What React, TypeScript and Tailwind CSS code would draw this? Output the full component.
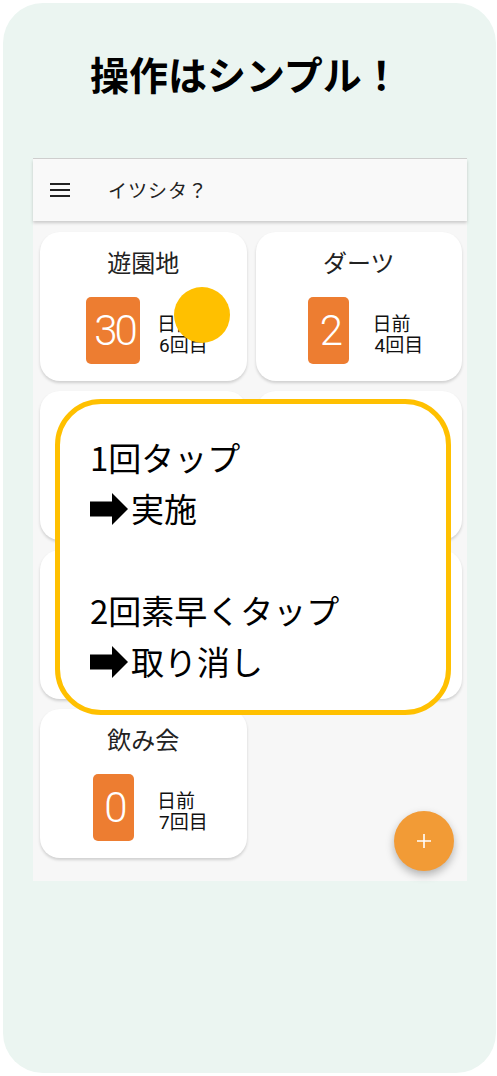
import React from 'react'

type Item = {
  title: string
  days: number
  count: number
}

// the middle four cards sit under the hint panel, only their edges show
const items: (Item | null)[] = [
  { title: '遊園地', days: 30, count: 6 },
  { title: 'ダーツ', days: 2, count: 4 },
  null,
  null,
  null,
  null,
  { title: '飲み会', days: 0, count: 7 },
]

function Arrow() {
  return (
    <svg
      width="38"
      height="32"
      viewBox="0 0 38 32"
      className="inline-block mr-[3px] align-[-3px]"
    >
      <path d="M0 8.5 H22 V0 L38 16 L22 32 V23.5 H0 Z" fill="#000" />
    </svg>
  )
}

function Card({ item, dot }: { item: Item | null; dot?: boolean }) {
  return (
    <div className="relative h-[149px] rounded-[20px] bg-white shadow-[0_2px_3px_rgba(0,0,0,0.16)]">
      {item && (
        <>
          <div className="pt-[16px] text-center text-[24px] leading-[28px] text-[#222]">
            {item.title}
          </div>
          <div className="mt-[21px] flex items-center pl-[38px]">
            <div className="flex w-[70px] justify-center">
              <div className="flex h-[67px] min-w-[41px] items-center justify-center rounded-[5px] bg-[#ed7d31] px-[5px] font-['Roboto',sans-serif] text-[42px] font-light leading-none tracking-[-3px] text-white">
                <span className="pl-[3px]">{item.days}</span>
              </div>
            </div>
            <div className="ml-[9px] mt-[6px] text-[19px] leading-[23px] text-[#111]">
              <div>日前</div>
              <div className="pl-[2px] font-['Roboto','Noto_Sans_CJK_JP',sans-serif]">
                {item.count}回目
              </div>
            </div>
          </div>
        </>
      )}
      {dot && (
        <div className="absolute left-[134px] top-[55px] h-[56px] w-[56px] rounded-full bg-[#ffc000]" />
      )}
    </div>
  )
}

export default function App() {
  return (
    <div className="h-[1076px] w-[497px] bg-white p-[3px] font-['Noto_Sans_CJK_JP',sans-serif]">
      <div className="flex h-[1070px] w-[493px] flex-col rounded-[40px] bg-[#ebf5f1]">
        <h1 className="mt-[51px] pl-[87px] text-[39px] font-bold leading-[39px] text-black">
          操作はシンプル！
        </h1>

        {/* phone screen */}
        <div className="ml-[30px] mt-[65px] w-[434px] border-t border-[#d0d0d0]">
          <div className="relative z-10 flex h-[62px] items-center bg-[#f9f9f9] shadow-[0_2px_3px_rgba(0,0,0,0.18)]">
            <div className="ml-[17px] flex w-[20px] flex-col gap-[4px]">
              <span className="h-[2px] bg-[#222]" />
              <span className="h-[2px] bg-[#222]" />
              <span className="h-[2px] bg-[#222]" />
            </div>
            <span className="ml-[38px] text-[19px] tracking-[1px] text-[#222]">
              イツシタ？
            </span>
          </div>

          <div className="relative h-[660px] bg-[#f7f7f7] pl-[7px] pr-[5px] pt-[11px]">
            <div className="grid grid-cols-2 gap-x-[9px] gap-y-[10px]">
              {items.map((item, i) => (
                <Card key={i} item={item} dot={i === 0} />
              ))}
            </div>

            {/* tap hint */}
            <div className="absolute left-[22px] top-[178px] h-[316px] w-[396px] rounded-[46px] border-[5px] border-[#ffc000] bg-white pl-[30px] pt-[28px] text-[33px] leading-[51px] text-black">
              <div>1回タップ</div>
              <div>
                <Arrow />
                実施
              </div>
              <div className="h-[51px]" />
              <div>2回素早くタップ</div>
              <div>
                <Arrow />
                取り消し
              </div>
            </div>

            <button className="absolute left-[361px] top-[590px] flex h-[60px] w-[60px] items-center justify-center rounded-full bg-[#f29b36] shadow-[0_4px_8px_rgba(0,0,0,0.28)]">
              <svg width="16" height="16" viewBox="0 0 16 16">
                <path d="M8 1 V15 M1 8 H15" stroke="#fff" strokeWidth="1.6" />
              </svg>
            </button>
          </div>
        </div>
      </div>
    </div>
  )
}
